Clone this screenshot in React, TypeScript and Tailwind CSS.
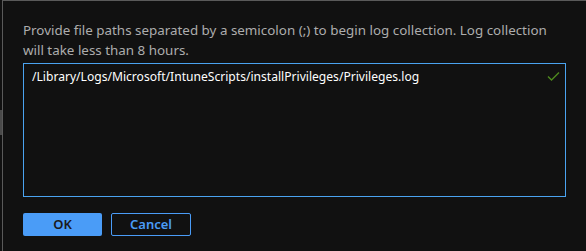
import React from 'react';

export default function App() {
  return (
    <div className="flex h-[251px] w-[586px] bg-[#111111] overflow-hidden" style={{ fontFamily: '"Noto Sans", "Open Sans", sans-serif' }}>
      {/* left edge of the page behind the panel */}
      <div className="w-[2px] flex flex-col pt-[110px]">
        <div className="h-[25px] w-[2px] bg-[#4a4a4a]" />
      </div>

      <div className="flex-1 border-l border-t border-[#5a5a5a] pl-[20px] pr-[20px] pt-[19px]">
        <p className="text-[13.4px] leading-[20px] text-[#adadad] w-[545px]">
          Provide file paths separated by a semicolon (;) to begin log collection. Log collection will take less than 8 hours.
        </p>

        <div className="relative mt-[3px] h-[134px] w-[543px] border border-[#4aa3f0]">
          <textarea
            className="h-full w-full resize-none bg-transparent px-[8px] pt-[3px] text-[12.1px] leading-[20px] text-white outline-none"
            defaultValue="/Library/Logs/Microsoft/IntuneScripts/installPrivileges/Privileges.log"
          />
          <svg className="absolute right-[5px] top-[7px]" width="13" height="10" viewBox="0 0 13 10" fill="none">
            <path d="M1 5.5 L4.5 9 L12 1.5" stroke="#4e8a1e" strokeWidth="1.4" />
          </svg>
        </div>

        <div className="mt-[16px] flex gap-[9px]">
          <button className="h-[23px] w-[79px] rounded-[2px] bg-[#4a9cf7] text-[13px] font-semibold text-[#1a1a1a]">
            OK
          </button>
          <button className="h-[23px] w-[80px] rounded-[2px] border border-[#4a9cf7] text-[13px] font-semibold text-[#4a9cf7]">
            Cancel
          </button>
        </div>
      </div>
    </div>
  );
}
